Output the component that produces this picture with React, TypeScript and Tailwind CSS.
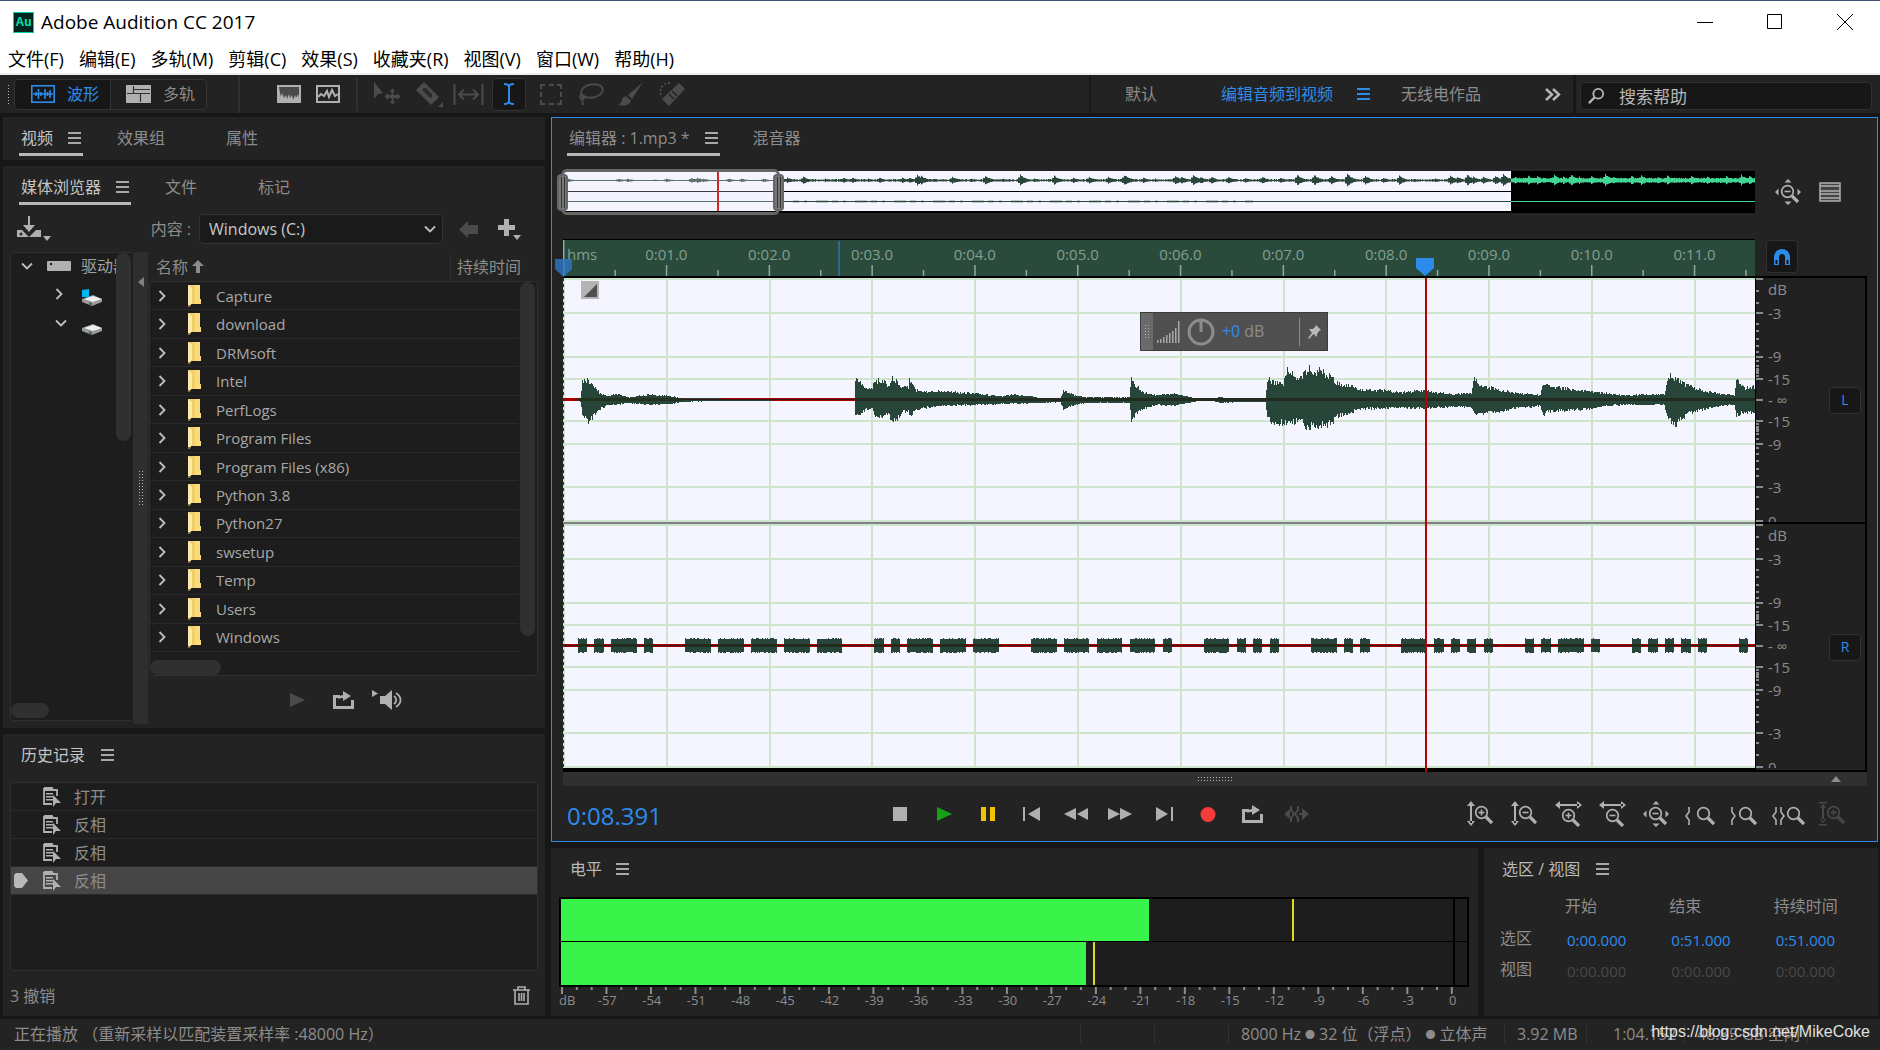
import type { ReactNode } from "react";
import clsx from "clsx";

const menus = ["文件(F)", "编辑(E)", "多轨(M)", "剪辑(C)", "效果(S)", "收藏夹(R)", "视图(V)", "窗口(W)", "帮助(H)"];

const folders = [
  "Capture",
  "download",
  "DRMsoft",
  "Intel",
  "PerfLogs",
  "Program Files",
  "Program Files (x86)",
  "Python 3.8",
  "Python27",
  "swsetup",
  "Temp",
  "Users",
  "Windows",
];

const history = ["打开", "反相", "反相", "反相"];

const seconds = Array.from({ length: 11 }, (_, i) => `0:${String(i + 1).padStart(2, "0")}.0`);

const WAVE_W = 1192;
const SECOND = 102.8;

// [x, height above the axis, height below the axis]
const leftEnvelope: [number, number, number][] = [
  [0, 0, 0], [15, 0, 0], [17, 2, 2], [19, 20, 16], [22, 20, 18], [24, 22, 18], [25, 22, 31], [26, 18, 22], [28, 16, 20],
  [33, 11, 14], [38, 6, 9], [44, 4, 5], [53, 6, 5], [66, 3, 3], [85, 6, 5], [107, 4, 4], [120, 2, 2], [150, 2, 1],
  [172, 1, 1], [194, 1, 1], [220, 0, 0], [291, 0, 0], [292, 22, 18], [298, 18, 13], [304, 11, 9], [309, 12, 10],
  [311, 20, 17], [320, 22, 19], [324, 13, 14], [329, 23, 21], [333, 21, 21], [339, 13, 13], [345, 14, 12], [346, 23, 18],
  [352, 11, 11], [361, 9, 8], [367, 10, 8], [380, 9, 6], [411, 7, 5], [437, 4, 4], [450, 6, 4], [480, 2, 3], [497, 2, 2],
  [500, 10, 10], [504, 8, 8], [512, 5, 5], [523, 3, 3], [566, 3, 3], [568, 22, 21], [573, 15, 15], [580, 8, 9],
  [593, 5, 5], [610, 7, 6], [627, 3, 3], [637, 0, 0], [650, 1, 1], [656, 3, 3], [676, 1, 2], [702, 2, 2], [704, 22, 16],
  [709, 20, 24], [715, 17, 24], [720, 17, 24], [724, 34, 27], [728, 31, 26], [732, 23, 22], [738, 24, 20], [741, 28, 32],
  [747, 35, 28], [752, 28, 29], [758, 33, 26], [763, 27, 27], [767, 25, 25], [774, 18, 18], [787, 15, 13], [797, 11, 9],
  [823, 10, 9], [836, 8, 8], [862, 10, 9], [889, 6, 7], [908, 7, 8], [911, 24, 15], [917, 15, 14], [932, 12, 13],
  [949, 8, 9], [977, 5, 6], [980, 19, 19], [984, 15, 12], [1006, 12, 11], [1027, 9, 9], [1045, 7, 6], [1062, 5, 5],
  [1101, 6, 5], [1105, 25, 22], [1113, 24, 26], [1123, 16, 15], [1140, 10, 10], [1157, 7, 6], [1171, 5, 5],
  [1173, 21, 17], [1181, 13, 13], [1192, 14, 14],
];

const rightBursts: [number, number][] = [
  [15, 24], [31, 41], [48, 74], [81, 90], [122, 148], [155, 181], [188, 214], [221, 247], [254, 279], [311, 321],
  [328, 337], [344, 370], [377, 403], [410, 436], [468, 494], [501, 526], [534, 559], [567, 592], [600, 609],
  [641, 666], [674, 683], [690, 699], [707, 716], [748, 774], [781, 790], [797, 807], [838, 863], [871, 881],
  [888, 897], [904, 913], [921, 930], [962, 971], [978, 988], [995, 1021], [1028, 1037], [1069, 1078], [1085, 1095],
  [1102, 1111], [1118, 1128], [1135, 1144], [1176, 1185],
];

// [x, height] of the notes in the overview strip
const overviewPeaks: [number, number][] = [
  [2, 3], [55, 2], [64, 2], [91, 1], [103, 2], [128, 3], [134, 3], [140, 2], [165, 2], [178, 2], [200, 2], [224, 3],
  [240, 4], [262, 2], [280, 3], [289, 3], [305, 2], [316, 3], [339, 3], [346, 3], [354, 6], [358, 5], [389, 4],
  [408, 2], [422, 5], [440, 2], [457, 6], [471, 2], [491, 5], [510, 3], [526, 4], [545, 4], [561, 6], [566, 3],
  [580, 3], [592, 2], [612, 5], [618, 4], [630, 6], [637, 4], [648, 4], [665, 4], [682, 3], [699, 4], [717, 3],
  [734, 6], [751, 6], [768, 5], [784, 7], [802, 5], [820, 3], [836, 5], [851, 2], [872, 2], [887, 5], [894, 4],
  [904, 6], [910, 4], [920, 4], [932, 5], [940, 7], [952, 4], [965, 5], [974, 5], [991, 6], [1000, 4], [1008, 7],
  [1016, 4], [1028, 5], [1042, 7], [1050, 4], [1068, 5], [1078, 6], [1094, 4], [1104, 5], [1128, 5], [1144, 4],
  [1163, 5], [1178, 6], [1186, 5],
];

const noise = (n: number) => {
  const v = Math.sin(n * 127.1 + 311.7) * 43758.5453;
  return v - Math.floor(v);
};

function sample(x: number): [number, number] {
  for (let i = 1; i < leftEnvelope.length; i++) {
    const [x1, u1, d1] = leftEnvelope[i];
    if (x <= x1) {
      const [x0, u0, d0] = leftEnvelope[i - 1];
      const t = (x - x0) / (x1 - x0);
      return [u0 + (u1 - u0) * t, d0 + (d1 - d0) * t];
    }
  }
  return [0, 0];
}

function bars(width: number, axis: number, heights: (x: number) => [number, number]) {
  let d = "";
  for (let x = 0; x < width; x++) {
    const [up, down] = heights(x);
    if (up + down > 0.6) d += `M${x} ${(axis - up).toFixed(1)}h1V${(axis + down).toFixed(1)}h-1z`;
  }
  return d;
}

const leftWave = bars(WAVE_W, 122, (x) => {
  const [u, d] = sample(x);
  return [u * (1.08 - 0.3 * noise(x)), d * (1.08 - 0.3 * noise(x + 5000))];
});

const rightWave = bars(WAVE_W, 367.5, (x) => {
  if (!rightBursts.some(([a, b]) => x >= a && x < b)) return [0, 0];
  return [6.6 + noise(x) * 0.7, 6.6 + noise(x + 900) * 0.7];
});

const overviewLeft = bars(WAVE_W, 9.5, (x) => {
  let h = x > 947 ? 1.8 + noise(x) : 0.6 + (x > 218 ? noise(x) * 0.9 : 0);
  for (const [px, ph] of overviewPeaks) {
    const dx = x - px;
    if (dx >= 0 && dx < 12) h = Math.max(h, ph * Math.exp(-dx / 6) * (0.75 + 0.25 * noise(x * 3)));
    if (dx < 0 && dx > -3) h = Math.max(h, ph * 0.5);
  }
  return [h, h * 0.85];
});

const gridRows = [1, 35, 79, 101, 143, 166, 209, 243];
const majorTicks = [1, 35, 79, 101, 122, 143, 166, 209, 243];
const minorTicks = [13, 25, 46, 53, 61, 68, 74, 83, 88, 91, 93, 95, 98];
const axisLabels: [number, string][] = [
  [12, "dB"], [36, "-3"], [79, "-9"], [102, "-15"], [123, "- ∞"], [144, "-15"], [167, "-9"], [210, "-3"], [244, "0"],
];

function Burger({ className }: { className?: string }) {
  return (
    <button aria-label="面板菜单" className={clsx("shrink-0", className ?? "text-[#a8a8a8]")}>
      <svg width="13" height="12" viewBox="0 0 13 12" fill="currentColor">
        <path d="M0 0h13v2H0zM0 5h13v2H0zM0 10h13v2H0z" />
      </svg>
    </button>
  );
}

function Grip({ className }: { className?: string }) {
  return (
    <div
      className={clsx(
        "bg-[radial-gradient(#b4b4b4_1px,transparent_1px)] bg-[length:3px_3px]",
        className,
      )}
    />
  );
}

function Chevron({ open }: { open?: boolean }) {
  return (
    <svg width="12" height="12" viewBox="0 0 12 12" fill="none" stroke="#c0c0c0" strokeWidth="1.8" className="shrink-0">
      <path d={open ? "M1 3.5l5 5 5-5" : "M3.5 1l5 5-5 5"} />
    </svg>
  );
}

function Folder() {
  return (
    <svg width="15" height="22" viewBox="0 0 15 22" className="shrink-0">
      <path d="M1 0h12v14h1v5H2z" fill="#f0cf6b" />
      <path d="M8 0h5v14h1v5H8z" fill="#fbdc7c" />
      <path d="M1 0l4 3v15l-2 3H1z" fill="#ffe9a9" />
      <path d="M1 20h2v2H1z" fill="#8d7a45" />
    </svg>
  );
}

function Drive({ system }: { system?: boolean }) {
  return (
    <svg width="22" height="18" viewBox="0 0 22 18" className="shrink-0">
      <path d="M1 10l11-4 9 4v3l-10 4-10-4z" fill="#9a9a9a" />
      <path d="M3 10l9-3 9 3-9 3z" fill="#f0f0f0" />
      <path d="M8 13l3 1v3l-3-1z" fill="#3c7a42" />
      {system && <path d="M1 1l7-1v8H1z" fill="#00b7f4" />}
    </svg>
  );
}

// Magnifier with an optional sign; strokes follow the text colour
function Lens({ x, y, sign }: { x: number; y: number; sign?: "+" | "-" }) {
  return (
    <g transform={`translate(${x} ${y})`}>
      <circle cx="6.5" cy="6.5" r="5.8" fill="none" stroke="currentColor" strokeWidth="1.7" />
      <path d="M11 11l6 6" stroke="currentColor" strokeWidth="3.2" />
      {sign && <path d="M3.5 6.5h6" stroke="currentColor" strokeWidth="1.6" />}
      {sign === "+" && <path d="M6.5 3.5v6" stroke="currentColor" strokeWidth="1.6" />}
    </g>
  );
}

function ZoomFull() {
  return (
    <svg width="26" height="26" viewBox="0 0 26 26" fill="currentColor">
      <Lens x={6} y={6} sign="-" />
      <path d="M13 0l3.5 3.5h-7zM13 26l3.5-3.5h-7zM0 13l3.5-3.5v7zM26 13l-3.5-3.5v7z" />
    </svg>
  );
}

function LoopIcon() {
  return (
    <svg width="21" height="18" viewBox="0 0 21 18">
      <path d="M7 5.5H1.5v11h18V9" fill="none" stroke="currentColor" strokeWidth="3" />
      <path d="M5 8c1-3 3-4 5-4V0l8 5-8 5V7c-2 0-3 0-5 1z" fill="currentColor" />
    </svg>
  );
}

const transport: { label: string; color: string; icon: ReactNode }[] = [
  { label: "停止", color: "text-[#b0b0b0]", icon: <path d="M5 5h14v14H5z" /> },
  { label: "播放", color: "text-[#18a018]", icon: <path d="M5 5l15 7-15 7z" /> },
  { label: "暂停", color: "text-[#f2c200]", icon: <path d="M5 5h5v14H5zM14 5h5v14h-5z" /> },
  { label: "上一个", color: "text-[#b0b0b0]", icon: <path d="M3 5h2v14H3zM20 5v14L8 12z" /> },
  { label: "快退", color: "text-[#b0b0b0]", icon: <path d="M12 6v12L0 12zM24 6v12l-11-6z" /> },
  { label: "快进", color: "text-[#b0b0b0]", icon: <path d="M0 6l12 6-12 6zM12 6l12 6-12 6z" /> },
  { label: "下一个", color: "text-[#b0b0b0]", icon: <path d="M4 5l12 7-12 7zM19 5h2v14h-2z" /> },
  { label: "录制", color: "text-[#f53b3b]", icon: <circle cx="12" cy="12.5" r="7.5" /> },
];

function IconButton({ label, className, children }: { label: string; className?: string; children: ReactNode }) {
  return (
    <button aria-label={label} className={clsx("flex items-center justify-center", className)}>
      {children}
    </button>
  );
}

function Tab({ active, bright, children }: { active?: boolean; bright?: boolean; children: ReactNode }) {
  return (
    <div
      className={clsx(
        "flex h-[38px] items-center gap-[15px] border-b-3 px-0.5 pt-1",
        active ? "border-[#b8b8b8]" : "border-transparent",
        bright ? "text-[#c4c4c4]" : "text-[#8c8c8c]",
      )}
    >
      <button>{children}</button>
      {active && <Burger />}
    </div>
  );
}

function TitleBar() {
  return (
    <header className="border-t border-b-2 border-t-[#3d5070] border-b-[#f0f0f0] bg-white text-black">
      <div className="flex h-[42px] items-center pl-[13px]">
        <svg width="21" height="21" viewBox="0 0 21 21" className="shrink-0">
          <rect x="0.5" y="0.5" width="20" height="20" fill="#00261f" stroke="#00d3aa" />
          <text x="10.5" y="14" fill="#00e4bb" fontSize="12" fontWeight="bold" textAnchor="middle" fontFamily="Liberation Sans, sans-serif">
            Au
          </text>
        </svg>
        <h1 className="ml-[7px] text-[19px] leading-6">Adobe Audition CC 2017</h1>
        <div className="ml-auto flex">
          <IconButton label="最小化" className="h-8 w-[70px]">
            <svg width="16" height="16" stroke="#000"><path d="M0 8.5h16" /></svg>
          </IconButton>
          <IconButton label="最大化" className="h-8 w-[70px]">
            <svg width="16" height="16" stroke="#000" fill="none"><path d="M.5.5h14v14H.5z" /></svg>
          </IconButton>
          <IconButton label="关闭" className="h-8 w-[70px]">
            <svg width="16" height="16" stroke="#000"><path d="M0 0l16 16M16 0L0 16" /></svg>
          </IconButton>
        </div>
      </div>
      <nav className="flex h-[30px] items-center gap-[15px] pt-0.5 pl-2 text-lg leading-6">
        {menus.map((m) => (
          <button key={m}>{m}</button>
        ))}
      </nav>
    </header>
  );
}

function Toolbar() {
  return (
    <div className="flex h-[38px] shrink-0 items-center bg-[#232323] text-base leading-5">
      <Grip className="mr-1 ml-[7px] h-[21px] w-[3px]" />
      <div className="flex h-[31px] rounded border border-[#333] bg-[#1f1f1f]">
        <button className="flex w-[95px] items-center gap-3 rounded-l bg-[#171717] pl-4 text-[#2d8ceb]">
          <svg width="24" height="18" viewBox="0 0 24 18" fill="none" stroke="currentColor" strokeWidth="1.6">
            <rect x="0.8" y="0.8" width="22.4" height="16.4" />
            <path d="M2 9h20M5 7v4M7.500 4v10M10 7v4M14 4v10M16.500 7v4M19 5v8" />
          </svg>
          波形
        </button>
        <button className="flex w-[96px] items-center gap-3 border-l border-[#333] pl-[15px] text-[#8c8c8c]">
          <svg width="25" height="18" viewBox="0 0 25 18">
            <rect width="25" height="18" fill="#b0b0b0" />
            <path d="M7.500 1v7M1 8.500h23M14.500 9v8M8 4.500h16" stroke="#333" strokeWidth="1.200" />
          </svg>
          多轨
        </button>
      </div>
      <div className="ml-[31px] h-full w-0.5 bg-[#303030]" />
      <div className="ml-[37px] flex items-center gap-[15px] text-[#b0b0b0]">
        <IconButton label="频谱频率显示">
          <svg width="24" height="18" viewBox="0 0 24 18">
            <rect width="24" height="18" fill="currentColor" />
            <path d="M2 2h20v11l-1-4-2 4-1-3-2 5-1-5-2 3-1-4-2 5-1-4-2 3-2-5-1 4-1-4z" fill="#4a4a4a" />
          </svg>
        </IconButton>
        <IconButton label="频谱音调显示">
          <svg width="24" height="18" viewBox="0 0 24 18" fill="none" stroke="currentColor" strokeWidth="2">
            <rect x="1" y="1" width="22" height="16" />
            <path d="M2 12l3-3 3 2 3-5 2 6 3-7 3 6 3-2" />
          </svg>
        </IconButton>
      </div>
      <div className="ml-4 h-[33px] w-0.5 bg-[#303030]" />
      <div className="ml-[15px] flex items-center text-[#4b4b4b]">
        <IconButton label="移动工具" className="mr-3.5">
          <svg width="28" height="24" viewBox="0 0 28 24" fill="currentColor">
            <path d="M1 0l9 11-5 1-4 5zM19.500 6.500l3 3h-2v3.500h3.500v-2l3.500 3.500-3.500 3.500v-2h-3.500v3.500h2l-3 3-3-3h2v-3.500H15v2l-3.500-3.500L15 11v2h3.500V9.500h-2z" />
          </svg>
        </IconButton>
        <IconButton label="切割工具" className="mr-2.5">
          <svg width="28" height="28" viewBox="0 0 28 28">
            <path d="M9 2l15 15-8 8L1 10z" fill="currentColor" />
            <path d="M8 8l3 0 6 6 0 4-3-1-6-6z" fill="#2a2a2a" />
            <path d="M28 22v5h-5z" fill="currentColor" />
          </svg>
        </IconButton>
        <IconButton label="滑动工具" className="mr-2">
          <svg width="31" height="21" viewBox="0 0 31 21" fill="none" stroke="currentColor" strokeWidth="2">
            <path d="M1.500 0v21M29.500 0v21M6 10.500h19M11 5.500l-5 5 5 5M20 5.500l5 5-5 5" />
          </svg>
        </IconButton>
        <IconButton label="时间选择工具" className="mr-3.5 h-[33px] w-[34px] rounded border border-[#333] bg-[#171717] text-[#2d8ceb]">
          <svg width="12" height="22" viewBox="0 0 12 22" fill="none" stroke="currentColor" strokeWidth="2">
            <path d="M1 1c3 0 5 1 5 3v14c0 2-2 3-5 3M11 1c-3 0-5 1-5 3v14c0 2 2 3 5 3" />
          </svg>
        </IconButton>
        <IconButton label="框选工具" className="mr-4">
          <svg width="22" height="21" viewBox="0 0 22 21" fill="none" stroke="currentColor" strokeWidth="2">
            <path d="M1 5V1h4M9 1h5M17 1h4v4M21 8v5M21 16v4h-4M14 20H9M5 20H1v-4M1 13V8" />
          </svg>
        </IconButton>
        <IconButton label="套索选择工具" className="mr-3.5">
          <svg width="26" height="23" viewBox="0 0 26 23" fill="none" stroke="currentColor" strokeWidth="2">
            <ellipse cx="14" cy="8" rx="11" ry="6.500" transform="rotate(-10 14 8)" />
            <path d="M4 11c-3 2-2 5 0 5s4-2 2-3-2 5-1 9" />
          </svg>
        </IconButton>
        <IconButton label="画笔选择工具" className="mr-[15px]">
          <svg width="26" height="26" viewBox="0 0 26 26" fill="currentColor">
            <path d="M25 1L10 14l4 4zM8.500 15.500c-4 0-4 2-5 5-1 2-2 3-3.500 3 5 2 12 1 13-4z" />
          </svg>
        </IconButton>
        <IconButton label="污点修复刷">
          <svg width="28" height="26" viewBox="0 0 28 26">
            <path d="M20 2l6 6-16 17-7-7z" fill="currentColor" />
            <path d="M13 10l5 5M10 13l5 5" stroke="#232323" strokeWidth="1.500" />
            <path d="M2 14c-2-6 1-12 9-12" fill="none" stroke="currentColor" strokeWidth="2" strokeDasharray="2 2" />
          </svg>
        </IconButton>
      </div>
      <div className="ml-auto flex h-full items-center text-[#8c8c8c]">
        <div className="h-full w-0.5 bg-[#181818]" />
        <button className="ml-[34px]">默认</button>
        <button className="ml-16 text-[#2d8ceb]">编辑音频到视频</button>
        <div className="ml-6 flex">
          <Burger className="text-[#2d8ceb]" />
        </div>
        <button className="ml-[31px]">无线电作品</button>
        <IconButton label="更多工作区" className="ml-16 text-[#b8b8b8]">
          <svg width="16" height="13" viewBox="0 0 16 13" fill="none" stroke="currentColor" strokeWidth="2.400">
            <path d="M1 1l6 5.500L1 12M8 1l6 5.500L8 12" />
          </svg>
        </IconButton>
        <div className="ml-3 h-full w-[3px] bg-[#181818]" />
        <label className="mt-1 mr-2 ml-1 flex h-[28px] w-[292px] items-center rounded border border-[#303030] bg-[#171717] pl-[7px]">
          <svg width="19" height="18" viewBox="0 0 19 18" fill="none" stroke="#b8b8b8" strokeWidth="2">
            <circle cx="11.500" cy="6.500" r="5.500" />
            <path d="M7.500 10.500L1 17" strokeWidth="2.500" />
          </svg>
          <input
            aria-label="搜索帮助"
            placeholder="搜索帮助"
            className="mt-0.5 ml-3.5 w-full bg-transparent text-[17px] outline-none placeholder:text-[#b8b8b8]"
          />
        </label>
      </div>
    </div>
  );
}

function MediaBrowser() {
  return (
    <section className="flex min-h-0 flex-1 flex-col bg-[#232323] pt-px pl-[7px]">
      <div className="flex pl-[9px]">
        <Tab active bright>媒体浏览器</Tab>
        <div className="ml-8"><Tab>文件</Tab></div>
        <div className="ml-[57px]"><Tab>标记</Tab></div>
      </div>
      <div className="mt-[9px] flex h-[30px] items-center pr-6 pl-[7px]">
        <IconButton label="导入" className="text-[#b0b0b0]">
          <svg width="34" height="26" viewBox="0 0 34 26" fill="currentColor">
            <path d="M11 0h2v9h5l-6 7-6-7h5zM0 14h5l7 7 7-7h5v7H0z" />
            <circle cx="4" cy="18" r="1.500" fill="#232323" />
            <path d="M26 20h8l-4 5z" />
          </svg>
        </IconButton>
        <label htmlFor="location" className="mr-2 ml-auto text-base text-[#8c8c8c]">内容 :</label>
        <div className="relative h-[30px] w-[244px]">
          <select
            id="location"
            className="h-full w-full appearance-none rounded border border-[#333] bg-[#1a1a1a] pl-[9px] text-base text-[#c8c8c8]"
          >
            <option>Windows (C:)</option>
          </select>
          <div className="pointer-events-none absolute top-[9px] right-[7px]"><Chevron open /></div>
        </div>
        <IconButton label="后退" className="ml-4 text-[#4b4b4b]">
          <svg width="19" height="17" viewBox="0 0 19 17" fill="currentColor"><path d="M0 8.500L9 0v4h10v9H9v4z" /></svg>
        </IconButton>
        <IconButton label="添加" className="ml-5 text-[#b0b0b0]">
          <svg width="23" height="21" viewBox="0 0 23 21" fill="currentColor">
            <path d="M6 0h5v6h6v5h-6v6H6v-6H0V6h6zM15 16h8l-4 5z" />
          </svg>
        </IconButton>
      </div>
      <div className="mt-2 flex min-h-0 flex-1 pb-1">
        <div className="mb-[3px] flex w-[124px] shrink-0 flex-col rounded border border-[#303030] bg-[#1d1d1d]">
          <div className="flex flex-1">
            <div className="min-w-0 flex-1 overflow-hidden text-base whitespace-nowrap text-[#a0a0a0]">
              <div className="flex h-[26px] items-center pl-2.5">
                <Chevron open />
                <svg width="24" height="10" viewBox="0 0 24 10" className="mr-2.5 ml-[14px] shrink-0">
                  <rect width="24" height="10" rx="1" fill="#b0b0b0" />
                  <circle cx="4" cy="3" r="1.200" fill="#222" />
                </svg>
                <span className="shrink-0">驱动器</span>
              </div>
              <div className="flex h-[29px] items-center pl-[42px]">
                <Chevron />
                <span className="mt-2 ml-4"><Drive system /></span>
              </div>
              <div className="flex h-[29px] items-center pl-[44px]">
                <Chevron open />
                <span className="mt-2 ml-3.5"><Drive /></span>
              </div>
            </div>
            <div className="mr-0.5 h-[188px] w-[15px] shrink-0 rounded-full bg-[#303030]" />
          </div>
          <div className="mb-0.5 h-[15px] w-[38px] rounded-full bg-[#303030]" />
        </div>
        <div className="flex w-[14px] shrink-0 flex-col items-center bg-[#2e2e2e]">
          <svg width="6" height="10" className="mt-[25px]"><path d="M6 0v10L0 5z" fill="#808080" /></svg>
          <Grip className="mt-[183px] h-9 w-[6px]" />
        </div>
        <div className="ml-px flex min-w-0 flex-1 flex-col pr-[7px]">
          <div className="flex h-[29px] items-center pl-[7px] text-base text-[#8c8c8c]">
            名称
            <svg width="12" height="13" viewBox="0 0 12 13" className="ml-1"><path d="M6 0l6 6H8v7H4V6H0z" fill="#8c8c8c" /></svg>
            <span className="mr-[17px] ml-auto border-l border-[#303030] pl-1.5">持续时间</span>
          </div>
          <div className="flex flex-1 flex-col rounded border border-[#303030] bg-[#1d1d1d]">
            <div className="flex flex-1">
              <ul className="flex flex-1 flex-col text-[15px] leading-5 text-[#a8a8a8]">
                {folders.map((name) => (
                  <li key={name} className="flex flex-1 items-center border-b border-[#2a2a2a] pl-1.5">
                    <Chevron />
                    <span className="mr-3.5 ml-[19px]"><Folder /></span>
                    {name}
                  </li>
                ))}
              </ul>
              <div className="mr-0.5 ml-0.5 h-[354px] w-[15px] rounded-full bg-[#303030]" />
            </div>
            <div className="mt-2 h-[15px] w-[71px] rounded-full bg-[#303030]" />
          </div>
          <div className="flex h-[48px] items-center pl-[141px] text-[#b0b0b0]">
            <IconButton label="试听" className="text-[#4b4b4b]">
              <svg width="15" height="14" fill="currentColor"><path d="M0 0l15 7-15 7z" /></svg>
            </IconButton>
            <IconButton label="循环试听" className="ml-7"><LoopIcon /></IconButton>
            <IconButton label="自动播放" className="ml-[18px]">
              <svg width="32" height="20" viewBox="0 0 32 20" fill="currentColor">
                <path d="M0 0l6 3.500L0 7zM8 6h5l7-6v20l-7-6H8z" />
                <path d="M22 6c3 2 3 6 0 8M24 3c6 4 6 10 0 14" fill="none" stroke="currentColor" strokeWidth="1.800" />
              </svg>
            </IconButton>
          </div>
        </div>
      </div>
    </section>
  );
}

function HistoryPanel() {
  return (
    <section className="flex h-[282px] shrink-0 flex-col bg-[#232323] px-[7px]">
      <div className="flex h-[48px] items-center gap-4 pb-1.5 pl-[11px] text-[#c4c4c4]">
        <h2>历史记录</h2>
        <Burger />
      </div>
      <ul className="flex-1 rounded border border-[#303030] bg-[#1d1d1d]">
        {history.map((step, i) => (
          <li
            key={i}
            className={clsx(
              "flex h-[28px] items-center border-b border-[#2a2a2a] text-[#8c8c8c]",
              i === history.length - 1 && "bg-[#464646]",
            )}
          >
            <span className="w-8 pl-[3px]">
              {i === history.length - 1 && (
                <svg width="14" height="15"><path d="M0 2l2-2h6l6 7.500L8 15H2l-2-2z" fill="#b8b8b8" /></svg>
              )}
            </span>
            <svg width="18" height="20" viewBox="0 0 18 20" className="mr-[13px]">
              <path d="M1 1h8l1 2h4v6M9 17H1V1" fill="none" stroke="#b0b0b0" strokeWidth="1.800" />
              <path d="M1 1h8v3H1zM3 6h7v1.500H3zM3 9h7v1.500H3zM3 12h7v1.500H3z" fill="#b0b0b0" />
              <path d="M10 8l8 8h-5l-3 4z" fill="#b0b0b0" />
            </svg>
            {step}
          </li>
        ))}
      </ul>
      <div className="flex h-[45px] items-center justify-between pt-1 pr-2 text-[#8c8c8c]">
        3 撤销
        <IconButton label="删除">
          <svg width="17" height="19" viewBox="0 0 17 19" fill="none" stroke="#b0b0b0" strokeWidth="1.600">
            <path d="M0 4h17M5 4V1h7v3M2 4v14h13V4M6 7v8M8.500 7v8M11 7v8" />
          </svg>
        </IconButton>
      </div>
    </section>
  );
}

function Overview() {
  return (
    <div className="relative mr-[122px] h-[42px]">
      <svg className="h-full w-full" viewBox="0 0 1192 42" preserveAspectRatio="none">
        <rect width="1192" height="42" fill="#000" />
        <rect width="948" height="40" fill="#f5f5ff" />
        <rect width="948" height="1" y="20" fill="#000" />
        <clipPath id="selected"><rect width="948" height="42" /></clipPath>
        <clipPath id="rest"><rect x="948" width="244" height="42" /></clipPath>
        <path d={overviewLeft} fill="#2a463a" clipPath="url(#selected)" />
        <path d={overviewLeft} fill="#41d693" clipPath="url(#rest)" />
        <rect y="30" width="948" height="1" fill="#2a463a" />
        <path d="M230 30.500H690" stroke="#2a463a" strokeWidth="2" strokeDasharray="6 5 3 9 12 4" opacity="0.500" />
        <rect x="948" y="30" width="244" height="1" fill="#41d693" />
        <rect width="210" height="38" x="3" y="1" fill="#f5f5ff" opacity="0.250" />
        <rect x="154" y="1" width="2" height="39" fill="#cc2a2a" />
      </svg>
      <div className="absolute -top-0.5 -left-0.5 h-[46px] w-[18.4%] rounded-md border-3 border-[#666]">
        <div className="absolute top-0.5 -left-[7px] flex h-[37px] w-[11px] justify-center gap-0.5 rounded border-2 border-[#666] bg-[#777] py-px">
          <div className="w-px bg-[#333]" />
          <div className="w-px bg-[#333]" />
        </div>
        <div className="absolute top-0.5 -right-[7px] flex h-[37px] w-[11px] justify-center gap-0.5 rounded border-2 border-[#666] bg-[#777] py-px">
          <div className="w-px bg-[#333]" />
          <div className="w-px bg-[#333]" />
        </div>
      </div>
      <div className="absolute top-2 -right-[86px] flex items-center gap-[18px] text-[#b0b0b0]">
        <IconButton label="全部缩小"><ZoomFull /></IconButton>
        <IconButton label="列表">
          <svg width="22" height="20" viewBox="0 0 22 20" fill="#444" stroke="currentColor" strokeWidth="1.500">
            <path d="M1 1h20v18H1zM1 4h20M1 9h20M1 12h20M1 16h20" />
          </svg>
        </IconButton>
      </div>
    </div>
  );
}

function Ruler() {
  return (
    <div className="relative h-[39px] border-t border-b-2 border-black bg-[#2a4b3c] text-[15px] leading-5 text-[#829f91]">
      <svg className="absolute inset-0 h-full w-full" viewBox="0 0 1192 36" preserveAspectRatio="none" fill="#8fa89c">
        {Array.from({ length: 24 }, (_, i) => (
          <rect key={i} x={i * (SECOND / 2)} y={i === 0 ? 0 : i % 2 ? 30 : 25} width="1.500" height="36" />
        ))}
        <rect x="275" y="1" width="2" height="35" fill="#2e6a8c" />
      </svg>
      <div className="relative grid grid-cols-[52fr_repeat(11,103fr)_9fr] pt-1 text-center">
        <span className="pl-1 text-left">hms</span>
        {seconds.map((s) => (
          <span key={s}>{s}</span>
        ))}
      </div>
      <svg width="18" height="18" className="absolute -bottom-px -left-2">
        <path d="M0 0h17v10l-8.500 8L0 10z" fill="#2d78c8" opacity="0.800" />
      </svg>
      <svg width="18" height="18" className="absolute bottom-0 left-[71.6%]">
        <path d="M0 0h18v10l-9 8-9-8z" fill="#2d8ceb" />
      </svg>
    </div>
  );
}

function Waveform() {
  return (
    <div className="relative min-h-0 flex-1">
      <svg className="absolute inset-0 h-full w-full" viewBox="0 0 1192 494" preserveAspectRatio="none" shapeRendering="crispEdges">
        <rect width="1192" height="494" fill="#f5f5ff" />
        <g fill="#cfe4cf">
          {[0, 246].map((top) =>
            gridRows.map((y) => <rect key={top + y} y={top + y - 1} width="1192" height="2" />),
          )}
          {Array.from({ length: 12 }, (_, i) => (
            <rect key={i} x={i * SECOND} width="2" height="490" />
          ))}
        </g>
        <rect y="244" width="1192" height="2" fill="#808080" />
        <rect y="120" width="1192" height="3" fill="#a80000" />
        <rect y="366" width="1192" height="3" fill="#a80000" />
        <path d={leftWave + rightWave} fill="#28453a" />
        <rect x="15" y="121" width="277" height="1" fill="#3a1512" />
        <rect x="15" y="120" width="105" height="3" fill="#26301f" />
        <rect x="292" y="120" width="900" height="3" fill="#232b20" />
        <rect y="367" width="1192" height="1" fill="#3a1512" />
        {rightBursts.map(([a, b]) => (
          <rect key={a} x={a} y="366" width={b - a} height="3" fill="#232b20" />
        ))}
        <path d="M0.500 0v490" stroke="#b00000" strokeDasharray="3 3" />
        <rect y="490" width="1192" height="4" fill="#000" />
        <rect x="862" width="2" height="494" fill="#b80000" />
      </svg>
      <svg width="18" height="18" className="absolute top-[3px] left-[18px]">
        <path d="M0 0h18v18H0z" fill="#b4b4b4" />
        <path d="M16 3v13H3z" fill="#505050" />
      </svg>
      <div className="absolute top-[34px] left-[48.400%] flex h-[39px] w-[188px] items-center border border-[#3a3f3a] bg-[#474747]/95 text-base">
        <div className="flex h-full w-3 items-center justify-center bg-[#6a6a6a]">
          <Grip className="h-[15px] w-[6px]" />
        </div>
        <svg width="23" height="22" viewBox="0 0 23 22" fill="#a8a8a8" className="ml-1">
          {[3, 4, 6, 8, 10, 12, 15, 22].map((h, i) => (
            <rect key={i} x={i * 3} y={22 - h} width="1.500" height={h} />
          ))}
        </svg>
        <svg width="28" height="28" viewBox="0 0 28 28" fill="none" stroke="#8c8c8c" strokeWidth="3" className="ml-[7px]">
          <circle cx="14" cy="14" r="12" />
          <path d="M14 2v12" />
        </svg>
        <div className="flex gap-1 pb-0.5 pl-[7px]">
          <button className="text-[#2d8ceb]">+0</button>
          <span className="text-[#8c8c8c]">dB</span>
        </div>
        <div className="mr-2 ml-auto h-7 w-px bg-[#8c8c8c]" />
        <IconButton label="固定" className="mr-1.5">
          <svg width="13" height="14" viewBox="0 0 13 14" fill="#b8b8b8">
            <path d="M8 0l5 5-2 1-2 3v3L5.500 9 1 14l-1-1 4-5-3-4h4l2-2z" />
          </svg>
        </IconButton>
      </div>
    </div>
  );
}

function Scale({ channel }: { channel: string }) {
  return (
    <div className="flex min-h-0 justify-between overflow-hidden border-b-2 border-black pr-1">
      <svg width="60" height="244" viewBox="0 0 60 244" className="shrink-0" fill="#8c8c8c">
        {majorTicks.map((y) => <rect key={y} y={y - 1} width="7" height="2" />)}
        {minorTicks.map((y) => (
          <g key={y}>
            <rect y={y - 1} width="3" height="2" />
            <rect y={243 - y} width="3" height="2" />
          </g>
        ))}
        {axisLabels.map(([y, text], i) => (
          <text key={i} x="12" y={y + 5} fontSize="15">{text}</text>
        ))}
      </svg>
      <button className="h-[27px] w-8 self-center rounded border border-[#303030] bg-[#171717] text-sm text-[#2d8ceb]">
        {channel}
      </button>
    </div>
  );
}

function Transport() {
  return (
    <div className="grid h-[55px] shrink-0 grid-cols-[307fr_440px_138fr_396px_23px] items-center pl-1">
      <span className="pt-1 text-2xl text-[#2d8ceb]">0:08.391</span>
      <div className="flex">
        {transport.map((t) => (
          <IconButton key={t.label} label={t.label} className={clsx("h-8 w-11", t.color)}>
            <svg width="24" height="24" viewBox="0 0 24 24" fill="currentColor">{t.icon}</svg>
          </IconButton>
        ))}
        <IconButton label="循环播放" className="h-8 w-11 text-[#b0b0b0]"><LoopIcon /></IconButton>
        <IconButton label="跳过所选项目" className="h-8 w-11 text-[#4b4b4b]">
          <svg width="25" height="18" viewBox="0 0 25 18" fill="none" stroke="currentColor" strokeWidth="2">
            <path d="M7 1v4l3 4-3 4v4M14 1v4l-3 4 3 4v4M15 9h5" />
            <path d="M0 9l6-5v10zM25 9l-7-6v12z" fill="currentColor" stroke="none" />
          </svg>
        </IconButton>
      </div>
      <span />
      <div className="flex text-[#b0b0b0]">
        <IconButton label="放大振幅" className="h-8 w-11">
          <svg width="26" height="26" viewBox="0 0 26 26" fill="currentColor">
            <path d="M3 3h2v19H3zM4 0l4 5H0zM4 25l4-5H0z" /><Lens x={8} y={5} sign="+" />
          </svg>
        </IconButton>
        <IconButton label="缩小振幅" className="h-8 w-11">
          <svg width="26" height="26" viewBox="0 0 26 26" fill="currentColor">
            <path d="M3 3h2v19H3zM4 0l4 5H0zM4 25l4-5H0z" /><Lens x={8} y={5} sign="-" />
          </svg>
        </IconButton>
        <IconButton label="放大时间" className="h-8 w-11">
          <svg width="27" height="26" viewBox="0 0 27 26" fill="currentColor">
            <path d="M3 3h21v2H3zM0 4l5-4v8zM27 4l-5-4v8z" /><Lens x={7} y={8} sign="+" />
          </svg>
        </IconButton>
        <IconButton label="缩小时间" className="h-8 w-11">
          <svg width="27" height="26" viewBox="0 0 27 26" fill="currentColor">
            <path d="M3 3h21v2H3zM0 4l5-4v8zM27 4l-5-4v8z" /><Lens x={7} y={8} sign="-" />
          </svg>
        </IconButton>
        <IconButton label="全部缩小" className="h-8 w-11"><ZoomFull /></IconButton>
        <IconButton label="放大入点" className="h-8 w-11">
          <svg width="30" height="20" viewBox="0 0 30 20" className="mt-1">
            <path d="M4 1v5L1 10l3 4v5" fill="none" stroke="currentColor" strokeWidth="1.600" /><Lens x={12} y={1} />
          </svg>
        </IconButton>
        <IconButton label="放大出点" className="h-8 w-11">
          <svg width="26" height="20" viewBox="0 0 26 20" className="mt-1">
            <path d="M1 1v5l3 4-3 4v5" fill="none" stroke="currentColor" strokeWidth="1.600" /><Lens x={8} y={1} />
          </svg>
        </IconButton>
        <IconButton label="缩放至选区" className="h-8 w-11">
          <svg width="33" height="20" viewBox="0 0 33 20" className="mt-1">
            <path d="M4 1v5l-3 4 3 4v5M9 1v5l3 4-3 4v5" fill="none" stroke="currentColor" strokeWidth="1.600" />
            <Lens x={15} y={1} />
          </svg>
        </IconButton>
        <IconButton label="缩放选定音轨" className="h-8 w-11 text-[#484848]">
          <svg width="26" height="24" viewBox="0 0 26 24" fill="currentColor">
            <path d="M0 0h8v1.500H0zM0 22h8v1.500H0zM3 5h2v14H3zM4 2l3 4H1zM4 21l3-4H1z" /><Lens x={8} y={4} sign="+" />
          </svg>
        </IconButton>
      </div>
    </div>
  );
}

function Editor() {
  return (
    <section className="flex min-h-0 flex-1 flex-col border border-[#2d8ceb] bg-[#232323] pl-[11px]">
      <div className="flex pl-1">
        <Tab active>编辑器 : 1.mp3 *</Tab>
        <div className="ml-[31px]"><Tab>混音器</Tab></div>
      </div>
      <div className="mt-[15px]"><Overview /></div>
      <div className="mt-[26px] grid min-h-0 flex-1 grid-cols-[1fr_112px] pr-2.5">
        <div className="flex min-h-0 flex-col">
          <Ruler />
          <Waveform />
        </div>
        <div className="flex min-h-0 flex-col">
          <div className="h-[37px] pt-px pl-[11px]">
            <IconButton label="对齐" className="h-[33px] w-8 rounded border border-[#303030] bg-[#171717]">
              <svg width="18" height="18" viewBox="0 0 18 18">
                <path d="M3.500 17V9a5.500 5.500 0 0111 0v8" fill="none" stroke="#2d8ceb" strokeWidth="5" />
                <path d="M2.500 12h2v4h-2zM13.500 12h2v4h-2z" fill="#171717" />
              </svg>
            </IconButton>
          </div>
          <div className="grid min-h-0 flex-1 grid-rows-[246fr_248fr] border-t-2 border-r-2 border-l border-black bg-[#212121]">
            <Scale channel="L" />
            <Scale channel="R" />
          </div>
        </div>
      </div>
      <div className="mr-2.5 grid h-[14px] shrink-0 grid-cols-[1fr_36px_1fr] items-center bg-[#303030] pr-[26px] pl-[26px]">
        <span />
        <Grip className="h-[6px]" />
        <svg width="10" height="6" className="justify-self-end"><path d="M5 0l5 6H0z" fill="#8c8c8c" /></svg>
      </div>
      <Transport />
    </section>
  );
}

const levels = [
  { fill: 588, peak: 731 },
  { fill: 525, peak: 532 },
];

function Levels() {
  return (
    <section className="min-w-0 bg-[#232323] pr-[9px] pl-2">
      <div className="flex h-[49px] items-center gap-3.5 pb-[7px] pl-[11px] text-[#b8b8b8]">
        <h2>电平</h2>
        <Burger />
      </div>
      <div className="grid grid-cols-[894fr_12fr] border-2 border-black bg-[#1d1d1d]">
        <div className="border-r-2 border-black">
          {levels.map(({ fill, peak }, i) => (
            <div key={i} className="relative h-[43px] border-b border-black last:border-b-0">
              <div className="h-full bg-[#39f24a]" style={{ width: `${(fill / 892) * 100}%` }} />
              <div className="absolute top-0 h-full w-0.5 bg-[#e0d818]" style={{ left: `${(peak / 892) * 100}%` }} />
            </div>
          ))}
        </div>
        <div>
          <div className="h-[43px] border-b border-black" />
        </div>
      </div>
      <svg className="h-[7px] w-full" viewBox="0 0 910 7" preserveAspectRatio="none" fill="#8c8c8c">
        {Array.from({ length: 61 }, (_, i) => (
          <rect key={i} x={2 + i * 14.83} width="2" height={i % 3 ? 3 : 7} />
        ))}
      </svg>
      <div className="-mr-[6px] -mt-1 grid grid-cols-[520fr_repeat(20,889fr)] text-center text-[13px] leading-5 text-[#8c8c8c]">
        <span className="text-left">dB</span>
        {Array.from({ length: 20 }, (_, i) => (
          <span key={i}>{i === 19 ? "0" : `-${57 - i * 3}`}</span>
        ))}
      </div>
    </section>
  );
}

function SelectionView() {
  return (
    <section className="bg-[#232323] pl-4">
      <div className="flex h-[42px] items-center gap-4 pl-0.5 text-[#b8b8b8]">
        <h2>选区 / 视图</h2>
        <Burger />
      </div>
      <table className="w-full table-fixed text-left text-[#8c8c8c]">
        <thead>
          <tr className="h-[32px]">
            <td className="w-[65px]" />
            <th className="font-normal">开始</th>
            <th className="font-normal">结束</th>
            <th className="font-normal">持续时间</th>
          </tr>
        </thead>
        <tbody>
          <tr className="h-[31px]">
            <th className="font-normal">选区</th>
            {["0:00.000", "0:51.000", "0:51.000"].map((v, i) => (
              <td key={i} className="pt-1 pl-0.5 text-[15px] text-[#2d8ceb]">{v}</td>
            ))}
          </tr>
          <tr className="h-[31px]">
            <th className="font-normal">视图</th>
            {["0:00.000", "0:00.000", "0:00.000"].map((v, i) => (
              <td key={i} className="pt-1 pl-0.5 text-[15px] text-[#484848]">{v}</td>
            ))}
          </tr>
        </tbody>
      </table>
    </section>
  );
}

function Dot() {
  return <span className="mx-1 align-middle text-[10px] leading-none">●</span>;
}

function StatusBar() {
  return (
    <footer className="relative mt-[3px] flex h-[29px] shrink-0 items-center bg-[#232323] pl-3.5 text-base text-[#8c8c8c]">
      <span>正在播放 （重新采样以匹配装置采样率 :48000 Hz）</span>
      <div className="ml-auto flex items-center whitespace-nowrap">
        <span className="mr-[73px] h-[18px] w-px bg-[#333]" />
        <span className="mr-[73px] h-[18px] w-px bg-[#333]" />
        <span className="h-[18px] w-px bg-[#333]" />
        <span className="w-[275px] pl-3">8000 Hz<Dot />32 位（浮点）<Dot />立体声</span>
        <span className="w-[82px] border-l border-[#333] pl-3 leading-[18px]">3.92 MB</span>
        <span className="w-[98px] border-l border-[#333] pl-[26px] leading-[18px]">1:04.152</span>
        <span className="w-[124px] border-x border-[#333] pl-3 leading-[18px]">48.85 GB 空闲</span>
        <span className="w-[72px]" />
      </div>
      <span className="absolute right-2.5 bottom-1 font-[Liberation_Sans,sans-serif] text-base leading-6 text-[#e0e0e0]">
        https://blog.csdn.net/MikeCoke
      </span>
    </footer>
  );
}

export default function App() {
  return (
    <div className="flex h-screen flex-col overflow-hidden bg-[#171717] font-['Open_Sans','Noto_Sans_CJK_SC',sans-serif] text-base leading-5">
      <TitleBar />
      <Toolbar />
      <main className="mt-1 grid min-h-0 flex-1 grid-cols-[542fr_1327fr] gap-1.5 pr-0.5 pl-[3px]">
        <div className="flex min-h-0 flex-col gap-1.5">
          <section className="flex h-[43px] shrink-0 bg-[#232323] pt-px pl-4">
            <Tab active bright>视频</Tab>
            <div className="ml-8"><Tab>效果组</Tab></div>
            <div className="ml-[57px]"><Tab>属性</Tab></div>
          </section>
          <MediaBrowser />
          <HistoryPanel />
        </div>
        <div className="flex min-h-0 min-w-0 flex-col gap-1.5">
          <Editor />
          <div className="grid h-[168px] shrink-0 grid-cols-[927fr_394fr] gap-1.5">
            <Levels />
            <SelectionView />
          </div>
        </div>
      </main>
      <StatusBar />
      <div className="h-0.5 shrink-0 bg-[#262626]" />
    </div>
  );
}
